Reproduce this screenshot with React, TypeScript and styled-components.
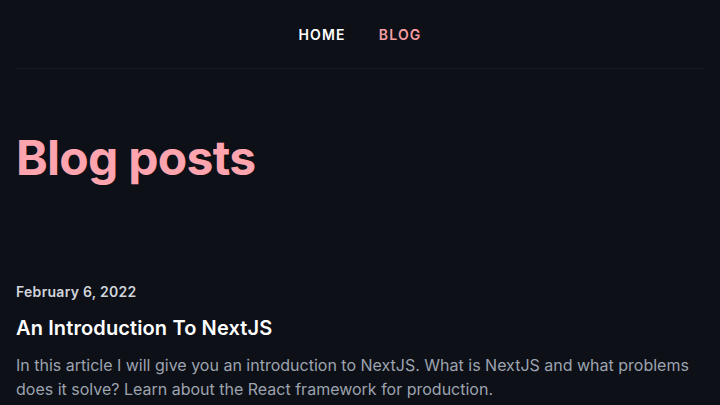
import { FC } from 'react';
import styled, { createGlobalStyle } from 'styled-components';

const GlobalStyle = createGlobalStyle`
   html, body {
      margin: 0;
      padding: 0;
      background: #0d1017;
      font-family: Inter, "Noto Sans", sans-serif;
      -webkit-font-smoothing: antialiased;
   }
`;

const Page = styled.div`
   padding: 0 16px;
`;

const Nav = styled.nav`
   display: flex;
   justify-content: center;
   gap: 33px;
   padding: 25px 0 23px;
   border-bottom: 1px solid #161b26;
`;

const NavLink = styled.a<{ $active?: boolean }>`
   font-size: 14px;
   line-height: 20px;
   font-weight: 600;
   letter-spacing: 0.085em;
   text-transform: uppercase;
   text-decoration: none;
   color: ${(p) => (p.$active ? '#f59ea4' : '#ffffff')};
`;

const Title = styled.h1`
   margin: 65px 0 0;
   font-size: 48px;
   line-height: 48px;
   font-weight: 700;
   letter-spacing: -0.015em;
   color: #fda4af;
`;

const PostList = styled.ul`
   list-style: none;
   margin: 100px 0 0;
   padding: 0;
`;

const PostDate = styled.time`
   display: block;
   font-size: 14px;
   line-height: 20px;
   font-weight: 600;
   letter-spacing: 0.02em;
   color: #d1d5db;
`;

const PostTitle = styled.h2`
   margin: 12px 0 0;
   font-size: 20px;
   line-height: 28px;
   font-weight: 600;
   letter-spacing: 0.006em;
   color: #ffffff;
`;

const Excerpt = styled.p`
   margin: 11px 0 0;
   font-size: 16px;
   line-height: 24px;
   color: #9ca3af;
`;

const posts = [
   {
      date: 'February 6, 2022',
      title: 'An Introduction To NextJS',
      excerpt:
         'In this article I will give you an introduction to NextJS. What is NextJS and what problems does it solve? Learn about the React framework for production.',
   },
];

const App: FC = () => (
   <>
      <GlobalStyle />
      <Page>
         <Nav>
            <NavLink href="#">Home</NavLink>
            <NavLink href="#" $active>Blog</NavLink>
         </Nav>
         <Title>Blog posts</Title>
         <PostList>
            {posts.map((post) => (
               <li key={post.title}>
                  <PostDate>{post.date}</PostDate>
                  <PostTitle>{post.title}</PostTitle>
                  <Excerpt>{post.excerpt}</Excerpt>
               </li>
            ))}
         </PostList>
      </Page>
   </>
);

export default App;
